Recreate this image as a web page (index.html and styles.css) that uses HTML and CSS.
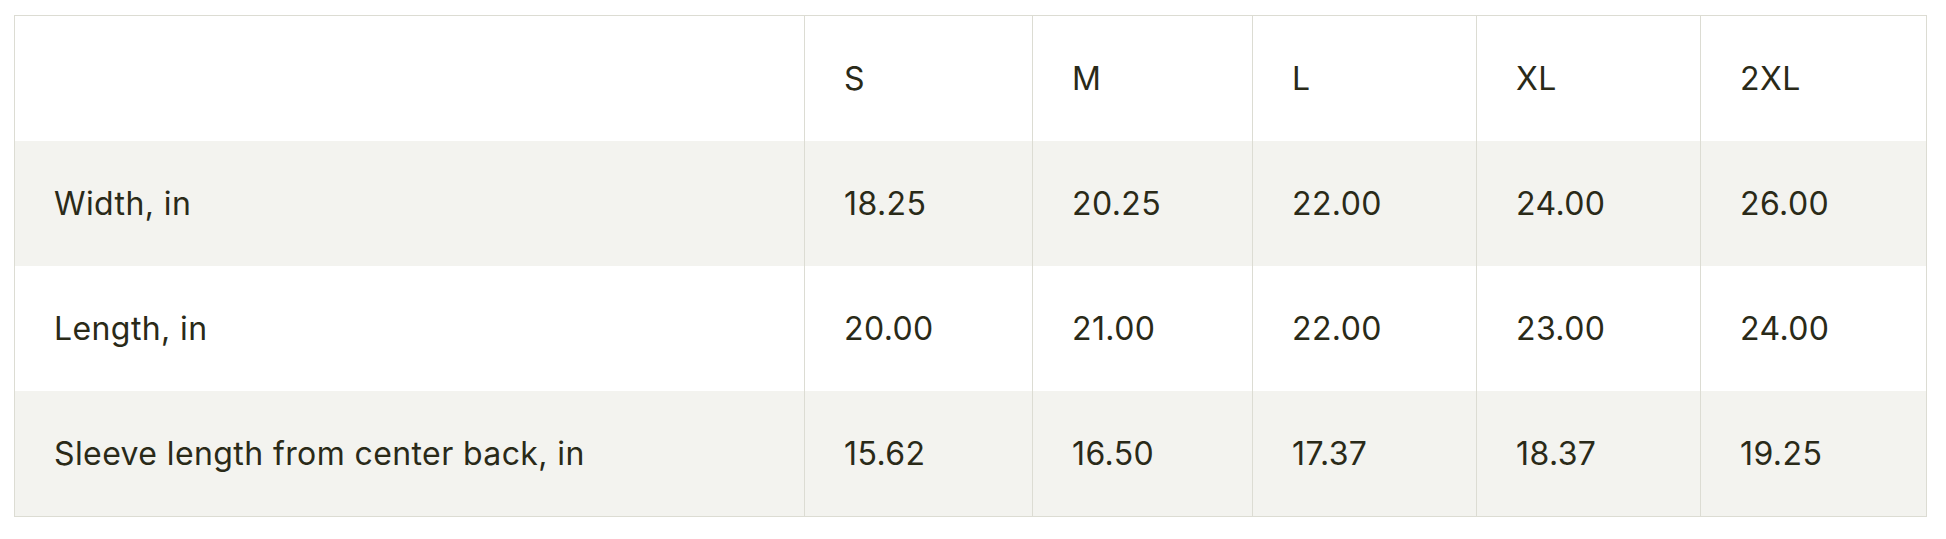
FILE: index.html
```html
<!DOCTYPE html>
<html>
<head>
<meta charset="utf-8">
<link rel="stylesheet" href="styles.css">
</head>
<body>
<table class="size-table">
  <colgroup>
    <col class="c-label">
    <col class="c-s">
    <col class="c-m">
    <col class="c-l">
    <col class="c-xl">
    <col class="c-2xl">
  </colgroup>
  <thead>
    <tr><th></th><th>S</th><th>M</th><th>L</th><th>XL</th><th>2XL</th></tr>
  </thead>
  <tbody>
    <tr class="alt"><td class="label">Width, in</td><td>18.25</td><td>20.25</td><td>22.00</td><td>24.00</td><td>26.00</td></tr>
    <tr><td class="label">Length, in</td><td>20.00</td><td>21.00</td><td>22.00</td><td>23.00</td><td>24.00</td></tr>
    <tr class="alt"><td class="label">Sleeve length from center back, in</td><td>15.62</td><td>16.50</td><td>17.37</td><td>18.37</td><td>19.25</td></tr>
  </tbody>
</table>
</body>
</html>
```
FILE: styles.css
```css
html, body {
  margin: 0;
  background: #ffffff;
}
body {
  padding: 15px 20px 0 14px;
  font-family: Inter, "Liberation Sans", sans-serif;
  color: #2a2a18;
}
.size-table {
  width: 1912px;
  border-collapse: collapse;
  table-layout: fixed;
  border: 1px solid #dcdcd3;
}
.c-label { width: 790px; }
.c-s { width: 228px; }
.c-m { width: 220px; }
.c-l { width: 224px; }
.c-xl { width: 224px; }
.c-2xl { width: 226px; }
.size-table th,
.size-table td {
  height: 125px;
  padding: 0 0 0 39px;
  text-align: left;
  vertical-align: middle;
  font-size: 32px;
  font-weight: 400;
  letter-spacing: 0.4px;
  line-height: 1;
  border-left: 1px solid #dcdcd3;
}
.size-table th:first-child,
.size-table td:first-child {
  border-left: none;
}
.size-table tr.alt {
  background: #f3f3ef;
}
```
